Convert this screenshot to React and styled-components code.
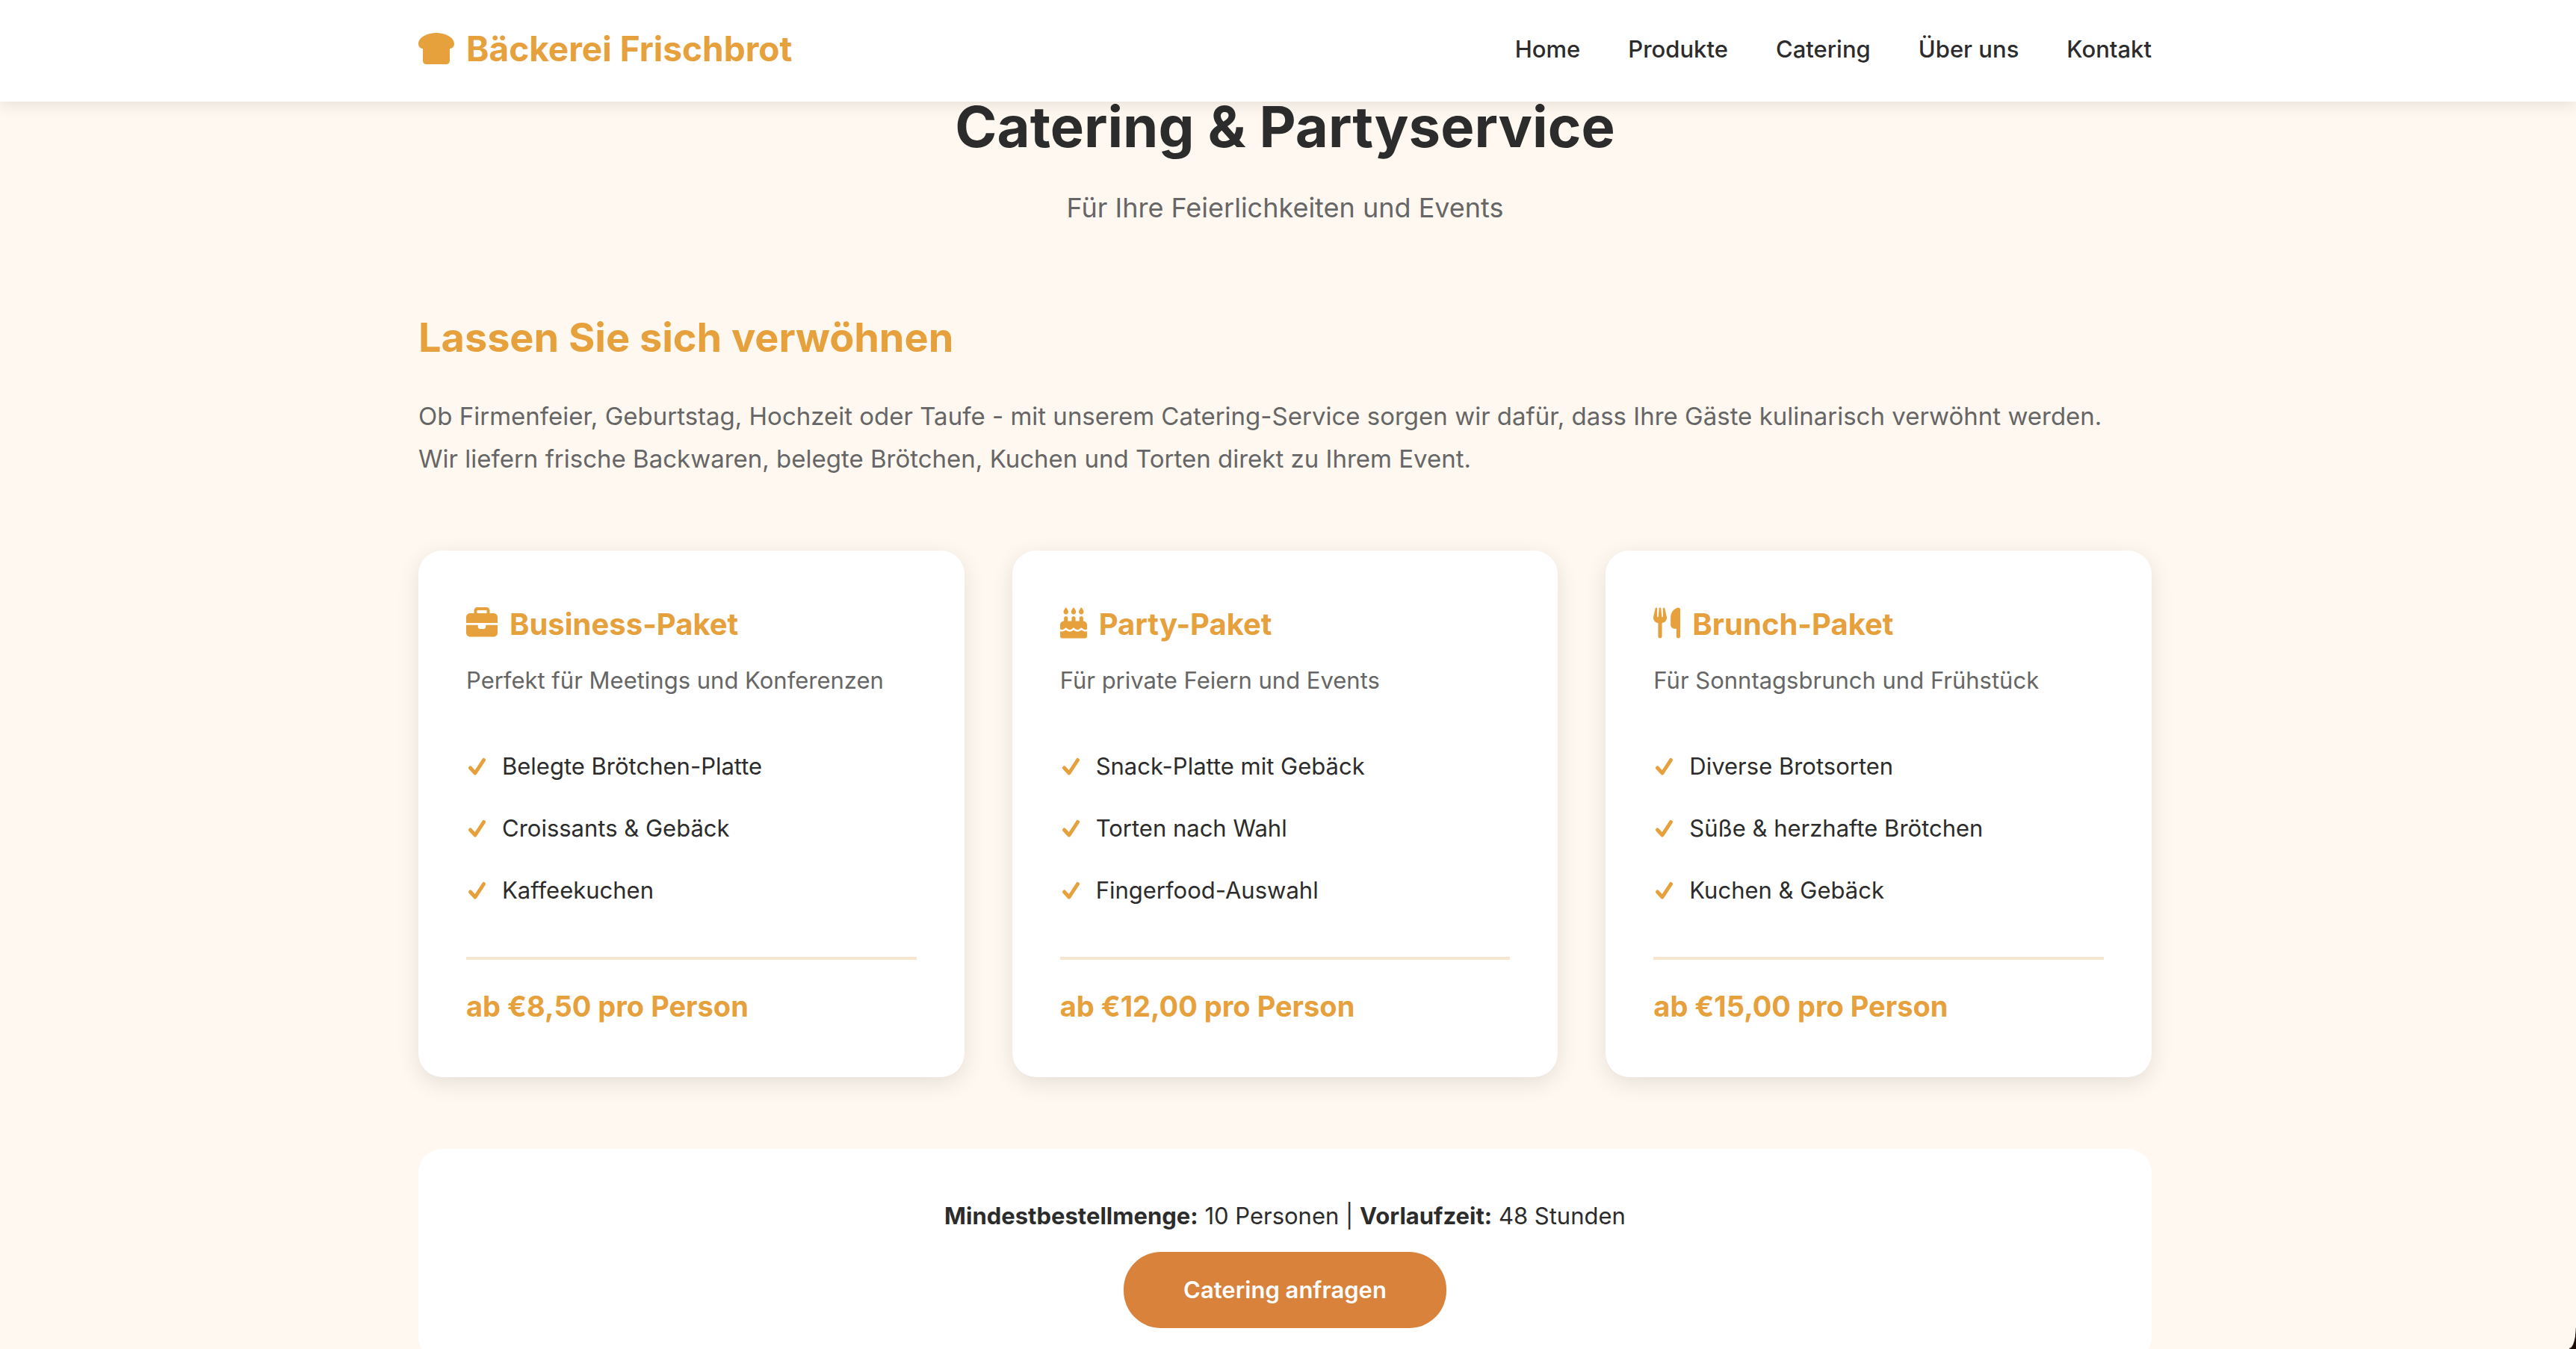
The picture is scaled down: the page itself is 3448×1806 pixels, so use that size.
import React from "react";
import styled, { createGlobalStyle } from "styled-components";
import { FaBreadSlice, FaBriefcase, FaCakeCandles, FaUtensils } from "react-icons/fa6";

const GlobalStyle = createGlobalStyle`
  * {
    margin: 0;
    padding: 0;
    box-sizing: border-box;
  }

  html {
    overflow: hidden;
  }

  body {
    font-family: Inter, "Liberation Sans", sans-serif;
    font-size: 32px;
    line-height: 51px;
    color: #2c2c2c;
    background: #fff8f0;
  }
`;

const Header = styled.header`
  position: sticky;
  top: 0;
  z-index: 10;
  padding-right: 8px;
  background: #ffffff;
  box-shadow: 0 4px 20px rgba(0, 0, 0, 0.1);
`;

const HeaderInner = styled.div`
  display: flex;
  justify-content: space-between;
  align-items: center;
  max-width: 2400px;
  height: 136px;
  margin: 0 auto;
  padding: 0 40px 6px;
`;

const Logo = styled.a`
  display: flex;
  align-items: center;
  gap: 16px;
  font-size: 46px;
  font-weight: 700;
  color: #e6a03c;
  text-decoration: none;

  svg {
    width: 48px;
    height: 48px;
  }
`;

const Nav = styled.nav`
  display: flex;
  gap: 64px;
`;

const NavLink = styled.a`
  font-size: 31px;
  font-weight: 500;
  color: #2c2c2c;
  text-decoration: none;
`;

const Main = styled.main`
  padding-right: 8px;
`;

const Container = styled.div`
  max-width: 2400px;
  margin: 0 auto;
  padding: 0 40px;
`;

const SectionHeader = styled.div`
  padding-bottom: 96px;
  text-align: center;
`;

const Title = styled.h1`
  font-size: 76px;
  line-height: 66px;
  font-weight: 700;
`;

const Subtitle = styled.p`
  padding-top: 46px;
  font-size: 36px;
  line-height: 60px;
  color: #666666;
`;

const Intro = styled.div`
  padding-bottom: 94px;
`;

const IntroTitle = styled.h2`
  padding-bottom: 30px;
  font-size: 54px;
  line-height: 95px;
  font-weight: 700;
  color: #e6a03c;
`;

const IntroText = styled.p`
  font-size: 33px;
  line-height: 57px;
  color: #666666;
`;

const Packages = styled.div`
  display: grid;
  grid-template-columns: repeat(3, 1fr);
  gap: 64px;
`;

const Card = styled.article`
  padding: 64px;
  background: #ffffff;
  border-radius: 32px;
  box-shadow: 0 8px 30px rgba(0, 0, 0, 0.1);
`;

const CardTitle = styled.h3`
  display: flex;
  align-items: center;
  gap: 16px;
  font-size: 40px;
  line-height: 70px;
  font-weight: 700;
  color: #e6a03c;

  svg {
    width: ${(props) => (props.$wide ? "42px" : "36px")};
    height: 42px;
    margin-bottom: 4px;
  }
`;

const CardText = styled.p`
  padding: 14px 0 48px;
  font-size: 31px;
  color: #666666;
`;

const Features = styled.ul`
  list-style: none;
`;

const Feature = styled.li`
  display: flex;
  align-items: center;
  gap: 20px;
  padding: 16px 0;
  font-size: 31px;

  svg {
    width: 28px;
    height: 32px;
    color: #e6a03c;
  }
`;

const Price = styled.p`
  margin-top: 48px;
  padding-top: 32px;
  border-top: 4px solid #f5e6d0;
  font-size: 38px;
  line-height: 61px;
  font-weight: 700;
  color: #e6a03c;
`;

const InfoBox = styled.div`
  margin-top: 96px;
  padding: 64px 64px 44px;
  background: #ffffff;
  border-radius: 32px;
  text-align: center;
`;

const InfoText = styled.p`
  padding-bottom: 23px;
  font-size: 31px;
`;

const Button = styled.button`
  display: block;
  margin: 0 auto;
  padding: 32px 80px;
  border: none;
  border-radius: 50px;
  background: #d9823b;
  color: #ffffff;
  font-family: inherit;
  font-size: 31px;
  line-height: 38px;
  font-weight: 600;
  cursor: pointer;
`;

// rounded window edge, bottom right
const WindowCorner = styled.div`
  position: fixed;
  right: 0;
  bottom: 0;
  width: 9px;
  height: 28px;
  background: radial-gradient(9px 28px at 0 0, transparent 92%, #1c0a06 100%);
`;

const links = ["Home", "Produkte", "Catering", "Über uns", "Kontakt"];

const packages = [
  {
    name: "Business-Paket",
    icon: <FaBriefcase />,
    wide: true,
    text: "Perfekt für Meetings und Konferenzen",
    features: ["Belegte Brötchen-Platte", "Croissants & Gebäck", "Kaffeekuchen"],
    price: "ab €8,50 pro Person",
  },
  {
    name: "Party-Paket",
    icon: <FaCakeCandles />,
    text: "Für private Feiern und Events",
    features: ["Snack-Platte mit Gebäck", "Torten nach Wahl", "Fingerfood-Auswahl"],
    price: "ab €12,00 pro Person",
  },
  {
    name: "Brunch-Paket",
    icon: <FaUtensils />,
    text: "Für Sonntagsbrunch und Frühstück",
    features: ["Diverse Brotsorten", "Süße & herzhafte Brötchen", "Kuchen & Gebäck"],
    price: "ab €15,00 pro Person",
  },
];

const CheckIcon = () => (
  <svg viewBox="0 0 28 32" fill="none" stroke="currentColor" strokeWidth="5" strokeLinecap="round" strokeLinejoin="round">
    <path d="M5.5 18l6.500 7L23.500 7.500" />
  </svg>
);

const App = () => {
  return (
    <>
      <GlobalStyle />
      <Header>
        <HeaderInner>
          <Logo href="#home">
            <FaBreadSlice />
            Bäckerei Frischbrot
          </Logo>
          <Nav>
            {links.map((link) => (
              <NavLink key={link} href={`#${link}`}>
                {link}
              </NavLink>
            ))}
          </Nav>
        </HeaderInner>
      </Header>
      <Main>
        <Container>
          <SectionHeader>
            <Title>Catering & Partyservice</Title>
            <Subtitle>Für Ihre Feierlichkeiten und Events</Subtitle>
          </SectionHeader>
          <Intro>
            <IntroTitle>Lassen Sie sich verwöhnen</IntroTitle>
            <IntroText>
              Ob Firmenfeier, Geburtstag, Hochzeit oder Taufe - mit unserem Catering-Service sorgen wir dafür, dass Ihre
              Gäste kulinarisch verwöhnt werden.
              <br />
              Wir liefern frische Backwaren, belegte Brötchen, Kuchen und Torten direkt zu Ihrem Event.
            </IntroText>
          </Intro>
          <Packages>
            {packages.map((item) => (
              <Card key={item.name}>
                <CardTitle $wide={item.wide}>
                  {item.icon}
                  {item.name}
                </CardTitle>
                <CardText>{item.text}</CardText>
                <Features>
                  {item.features.map((feature) => (
                    <Feature key={feature}>
                      <CheckIcon />
                      {feature}
                    </Feature>
                  ))}
                </Features>
                <Price>{item.price}</Price>
              </Card>
            ))}
          </Packages>
          <InfoBox>
            <InfoText>
              <strong>Mindestbestellmenge:</strong> 10 Personen | <strong>Vorlaufzeit:</strong> 48 Stunden
            </InfoText>
            <Button type="button">Catering anfragen</Button>
          </InfoBox>
        </Container>
      </Main>
      <WindowCorner />
    </>
  );
};

export default App;
